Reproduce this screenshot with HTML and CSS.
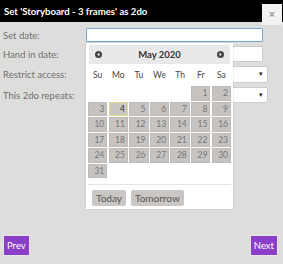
FILE: index.html
```html
<!DOCTYPE html>
<html lang="en">
<head>
    <meta charset="UTF-8">
    <title>Set 2do</title>
    <link rel="stylesheet" href="styles.css">
</head>
<body>
    <div class="dialog">
        <div class="titlebar">
            <span class="title">Set 'Storyboard - 3 frames' as 2do</span>
            <button class="close">&times;</button>
        </div>

        <div class="form">
            <label>Set date:</label>
            <input type="text" class="field focused">
            <label>Hand in date:</label>
            <input type="text" class="field">
            <label>Restrict access:</label>
            <div class="select"><span class="arrow">&#9662;</span></div>
            <label>This 2do repeats:</label>
            <div class="select"><span class="arrow">&#9662;</span></div>
        </div>

        <!-- datepicker popup over the form -->
        <div class="picker">
            <div class="picker-head">
                <span class="nav"><svg width="7" height="7" viewBox="0 0 8 8"><circle cx="4" cy="4" r="4" fill="#444"/><path d="M5 2 L2.6 4 L5 6 Z" fill="#fff"/></svg></span>
                <span class="month">May 2020</span>
                <span class="nav"><svg width="7" height="7" viewBox="0 0 8 8"><circle cx="4" cy="4" r="4" fill="#444"/><path d="M3 2 L5.4 4 L3 6 Z" fill="#fff"/></svg></span>
            </div>
            <div class="weekdays">
                <span>Su</span><span>Mo</span><span>Tu</span><span>We</span><span>Th</span><span>Fr</span><span>Sa</span>
            </div>
            <div class="days" id="days"></div>
            <div class="picker-foot">
                <button class="quick">Today</button>
                <button class="quick">Tomorrow</button>
            </div>
        </div>

        <div class="footer">
            <button class="step">Prev</button>
            <button class="step">Next</button>
        </div>
    </div>

    <script>
        // May 2020 starts on a Friday
        const days = document.getElementById('days');
        for (let i = 0; i < 5; i++) {
            days.appendChild(document.createElement('span'));
        }
        for (let d = 1; d <= 31; d++) {
            const cell = document.createElement('span');
            cell.className = d === 4 ? 'day today' : 'day';
            cell.textContent = d;
            days.appendChild(cell);
        }
    </script>
</body>
</html>
```

FILE: styles.css
```css
html, body {
    margin: 0;
    height: 100%;
}
body {
    background-color: #dddddb;
    font-family: Lato, "Open Sans", sans-serif;
    color: #555;
}
.dialog {
    position: relative;
    height: 264px;
    display: flex;
    flex-direction: column;
}
.titlebar {
    background-color: #000;
    height: 22px;
    display: flex;
    align-items: flex-start;
    justify-content: space-between;
}
.title {
    color: #fff;
    font-weight: bold;
    font-size: 9.6px;
    padding: 6px 0 0 4px;
}
.close {
    margin: 4px 1px 0 0;
    width: 20px;
    height: 21px;
    padding: 0;
    border: none;
    background-color: #f2f2f2;
    color: #999;
    font-size: 10px;
    font-weight: bold;
    line-height: 21px;
}
.form {
    display: grid;
    grid-template-columns: 83px 182px;
    grid-template-rows: 14px 16px 17px 16px;
    row-gap: 4px;
    padding: 6px 0 0 3px;
    font-size: 9.5px;
}
.form label {
    align-self: center;
    color: #707070;
}
.field, .select {
    box-sizing: border-box;
    width: 177px;
    height: 100%;
    margin: 0;
    border: 1px solid #ccc;
    background-color: #fff;
    border-radius: 1px;
    padding: 0;
}
.focused {
    border-color: #77a6d9;
}
.select {
    width: 182px;
    border-radius: 2px;
    position: relative;
}
.arrow {
    position: absolute;
    right: 4px;
    top: 2px;
    font-size: 7px;
    color: #222;
}
.picker {
    position: absolute;
    left: 86px;
    top: 43px;
    width: 143px;
    padding: 2px 2px 3px;
    background-color: #fff;
    box-shadow: 0 0 2px rgba(0, 0, 0, 0.15);
}
.picker-head {
    height: 19px;
    margin-left: 1px;
    margin-right: 1px;
    background-color: #e9e9e9;
    display: flex;
    align-items: center;
    justify-content: space-between;
    padding: 0 6px;
}
.nav {
    display: flex;
}
.month {
    font-weight: bold;
    font-size: 9.5px;
    color: #333;
}
.weekdays {
    display: grid;
    grid-template-columns: repeat(7, 1fr);
    column-gap: 1.3px;
    height: 22px;
    align-items: center;
    text-align: center;
    font-size: 8.5px;
    color: #444;
}
.days {
    display: grid;
    grid-template-columns: repeat(7, 1fr);
    grid-auto-rows: 14.5px;
    gap: 1px 1.3px;
    font-size: 8.5px;
}
.day {
    box-sizing: border-box;
    background-color: #c6c3c1;
    border: 1px solid #bdbab8;
    color: #777;
    text-align: right;
    padding-right: 2px;
    line-height: 12.5px;
}
.today {
    background-color: #c9c6c3;
    border-color: #e3d98a;
    color: #333;
}
.picker-foot {
    margin-top: 6px;
    border-top: 1px solid #e4e4e4;
    padding: 5px 0 0 4px;
    display: flex;
    gap: 5px;
}
.quick {
    height: 16px;
    padding: 0 4px;
    border: none;
    border-radius: 2px;
    background-color: #c9c6c4;
    color: #555;
    font-family: Lato, "Open Sans", sans-serif;
    font-size: 10px;
}
.footer {
    margin-top: auto;
    display: flex;
    justify-content: space-between;
    padding: 0 5px 8px 3px;
}
.step {
    height: 21px;
    padding: 0 3px;
    border: 1px solid #e6e6e6;
    background-color: #8b3ec8;
    color: #fff;
    font-family: Lato, "Open Sans", sans-serif;
    font-size: 9.5px;
}
```
